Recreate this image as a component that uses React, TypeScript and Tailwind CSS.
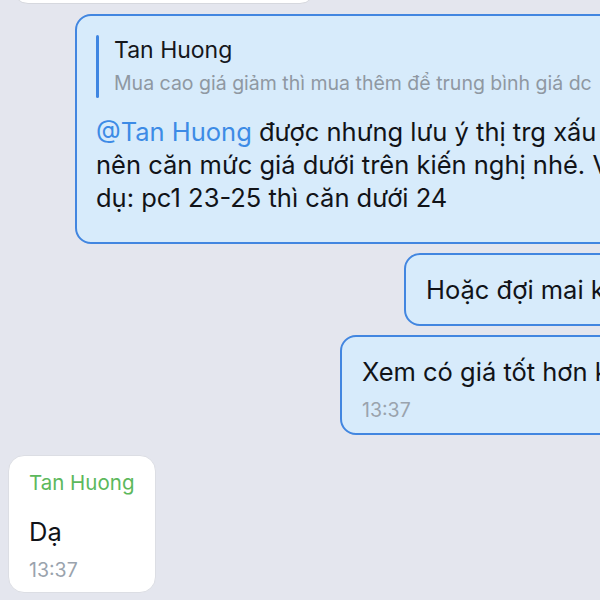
export default function App() {
  const font = { fontFamily: "Inter, 'Noto Sans', sans-serif" };
  return (
    <div className="w-[600px] h-[600px] overflow-hidden bg-[#e4e6ee] relative" style={font}>
      {/* previous incoming bubble, only its bottom visible */}
      <div className="ml-[12px] w-[304px] h-[40px] -mt-[36px] bg-white rounded-b-[16px] border border-[#d6d8de]" />

      {/* outgoing reply bubble */}
      <div className="ml-[75px] mt-[10px] w-[620px] rounded-[16px] border-2 border-[#4286e0] bg-[#d7ebfb] pl-[19px] pt-[19px] pb-[28px]">
        <div className="flex gap-[15px]">
          <div className="w-[3px] rounded-full bg-[#3f86e2]" />
          <div className="whitespace-nowrap">
            <div className="text-[23px] leading-[30px] text-[#15171c]">Tan Huong</div>
            <div className="mt-[3px] text-[19.5px] leading-[30px] text-[#8f98a2]">
              Mua cao giá giảm thì mua thêm để trung bình giá dc
            </div>
          </div>
        </div>
        <div className="mt-[17px] text-[25.5px] leading-[33px] text-[#111318] whitespace-nowrap">
          <span className="text-[#3d8be6]">@Tan Huong</span> được nhưng lưu ý thị trg xấu
          <br />
          nên căn mức giá dưới trên kiến nghị nhé. Ví
          <br />
          dụ: pc1 23-25 thì căn dưới 24
        </div>
      </div>

      <div className="ml-[404px] mt-[9px] w-[300px] h-[73px] rounded-[16px] border-2 border-[#4286e0] bg-[#d7ebfb] pl-[20px] flex items-center">
        <span className="text-[25.5px] leading-[33px] text-[#111318] whitespace-nowrap">Hoặc đợi mai k</span>
      </div>

      <div className="ml-[340px] mt-[9px] w-[320px] h-[100px] rounded-[16px] border-2 border-[#4286e0] bg-[#d7ebfb] pl-[20px] pt-[18px]">
        <div className="text-[25.5px] leading-[33px] text-[#111318] whitespace-nowrap">Xem có giá tốt hơn không</div>
        <div className="mt-[10px] text-[19.5px] leading-[24px] text-[#9aa3ad]">13:37</div>
      </div>

      {/* incoming */}
      <div className="ml-[8px] mt-[20px] w-[148px] h-[138px] rounded-[16px] bg-white border border-[#dcdee4] pl-[20px] pt-[13px]">
        <div className="text-[20.5px] leading-[28px] text-[#5cb85c]">Tan Huong</div>
        <div className="mt-[18px] text-[25.5px] leading-[33px] text-[#111318]">Dạ</div>
        <div className="mt-[10px] text-[19.5px] leading-[24px] text-[#9aa3ad]">13:37</div>
      </div>
    </div>
  );
}
